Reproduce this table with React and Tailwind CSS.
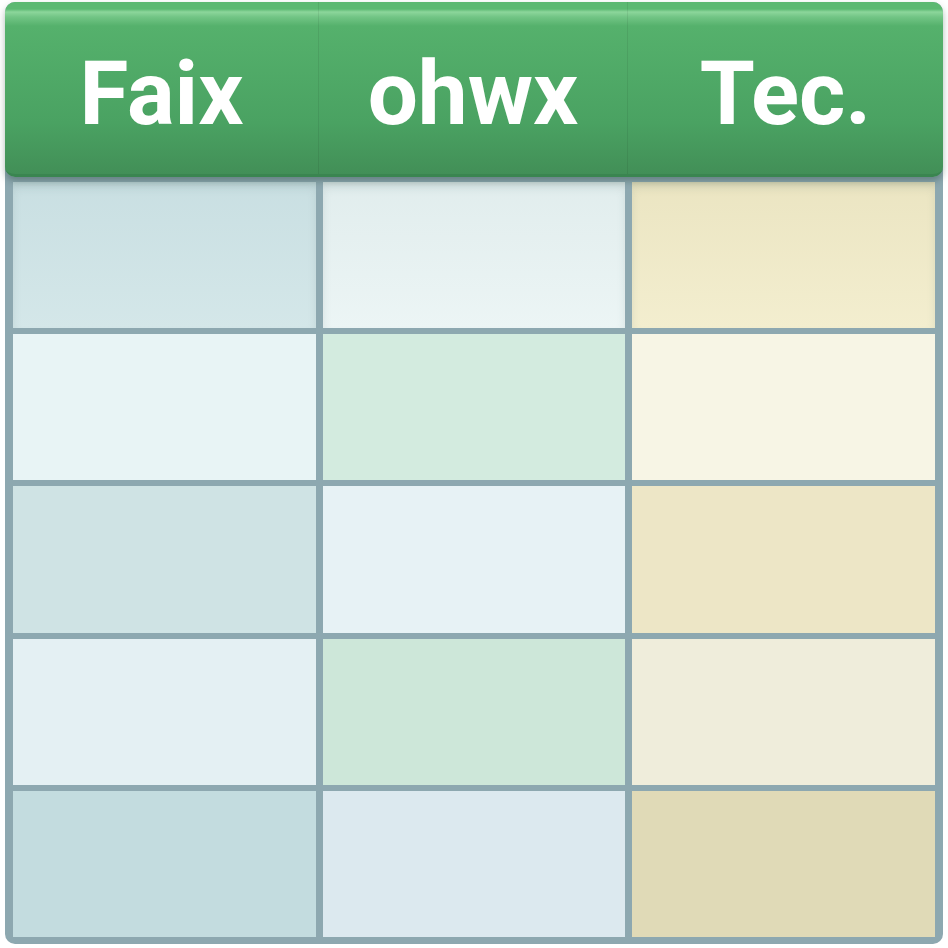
import React from 'react';

const headers = ['Faix', 'ohwx', 'Tec.'];

// cell colours, row by row
const rows = [
    ['bg-gradient-to-b from-[#c9dfe2] to-[#d4e7e9]', 'bg-gradient-to-b from-[#e1eded] to-[#ecf5f5]', 'bg-gradient-to-b from-[#ebe5c2] to-[#f3eecf]'],
    ['bg-[#e8f4f5]', 'bg-[#d3ebdf]', 'bg-[#f7f5e5]'],
    ['bg-[#cfe3e4]', 'bg-[#e7f2f5]', 'bg-[#ede6c6]'],
    ['bg-[#e4f0f3]', 'bg-[#cde7d9]', 'bg-[#efeddb]'],
    ['bg-[#c3dcdf]', 'bg-[#dce9ef]', 'bg-[#e0dab7]'],
];

const App = () => {
    return (
        <div className="w-[948px] h-[948px] bg-white pl-[5px] pt-[2px]">
            <div className="w-[938px] h-[942px] bg-[#8da8b0] rounded-[10px] flex flex-col">
                {/* HEADER */}
                <div className="relative z-10 h-[175px] rounded-[10px] border-b-[3px] border-[#3a8550] shadow-[0_4px_7px_rgba(30,60,50,0.35)] bg-[linear-gradient(to_bottom,#5cb972_0px,#5cb972_7px,#8cd69b_10px,#72c585_15px,#55b16c_24px,#4aa262_70%,#428f57_100%)] grid grid-cols-[314px_309px_1fr]">
                    {headers.map((h, i) => (
                        <div
                            key={h}
                            className={`flex items-center justify-center pt-[10px] ${i < 2 ? 'border-r border-[rgba(0,0,0,0.07)]' : ''}`}
                        >
                            <span className="text-white font-bold text-[89px] leading-none font-['Roboto','Liberation_Sans',sans-serif]">
                                {h}
                            </span>
                        </div>
                    ))}
                </div>

                {/* GRID */}
                <div className="flex-1 grid grid-cols-3 grid-rows-5 gap-x-[7px] gap-y-[6px] px-[8px] pt-[5px] pb-[7px]">
                    {rows.map((row, r) =>
                        row.map((cls, c) => (
                            <div key={`${r}-${c}`} className={`${cls} ${r === 0 ? 'shadow-[inset_0_6px_8px_rgba(60,90,90,0.12)]' : ''}`} />
                        ))
                    )}
                </div>
            </div>
        </div>
    );
};

export default App;
